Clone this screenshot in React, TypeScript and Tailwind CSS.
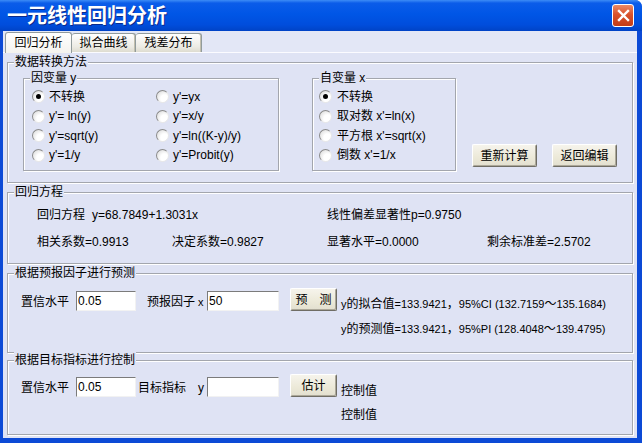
import React from "react";

// CJK runs stay at 12px, the latin runs in between drop to 11px
const Mixed = ({ text }: { text: string }) => (
  <>
    {text.split(/([\u3000-\u9fff\uff00-\uffef]+)/).map((part, i) =>
      /[\u3000-\u9fff\uff00-\uffef]/.test(part) ? (
        <span key={i}>{part}</span>
      ) : (
        <span key={i} className="text-[11px]">
          {part}
        </span>
      )
    )}
  </>
);

const Radio = ({ checked }: { checked?: boolean }) => (
  <span className="inline-flex h-[13px] w-[13px] shrink-0 items-center justify-center rounded-full border border-t-[#8a8a8a] border-l-[#8a8a8a] border-b-[#e8e8e8] border-r-[#e8e8e8] bg-[radial-gradient(circle_at_70%_70%,#ffffff_35%,#d4d4d4_100%)]">
    {checked && <span className="h-[5px] w-[5px] rounded-full bg-black" />}
  </span>
);

const Group = ({
  title,
  className,
  children,
}: {
  title: string;
  className?: string;
  children?: React.ReactNode;
}) => (
  <div
    className={
      "relative border border-[#a3a6ad] shadow-[inset_1px_1px_0_#ffffff,1px_1px_0_#ffffff] " +
      (className || "")
    }
  >
    <span className="absolute left-[6px] top-[-9px] bg-[#dfe3f4] px-[1px] leading-[16px] whitespace-nowrap">
      {title}
    </span>
    {children}
  </div>
);

const Button = ({ label, className }: { label: string; className?: string }) => (
  <button
    className={
      "flex h-[23px] shrink-0 items-center justify-center rounded-[2px] border border-t-[#ffffff] border-l-[#ffffff] border-b-[#6f6d64] border-r-[#6f6d64] bg-[linear-gradient(180deg,#f6f4ec_0%,#ece9d8_60%,#e2dfcf_100%)] shadow-[inset_-1px_-1px_0_#aca899] leading-[16px] " +
      (className || "")
    }
  >
    {label}
  </button>
);

const TextBox = ({ value, className }: { value?: string; className?: string }) => (
  <input
    readOnly
    value={value || ""}
    className={
      "h-[20px] shrink-0 border border-t-[#7b7b7b] border-l-[#7b7b7b] border-b-[#f2f2f2] border-r-[#f2f2f2] bg-white pl-[1px] text-[12px] leading-[16px] outline-none " +
      (className || "")
    }
  />
);

const Option = ({ checked, label, gap }: { checked?: boolean; label: string; gap: string }) => (
  <div className="flex items-center whitespace-nowrap">
    <Radio checked={checked} />
    <span className={gap}>{label}</span>
  </div>
);

export default function App() {
  const yOptions = [
    { label: "不转换", checked: true },
    { label: "y'=yx" },
    { label: "y'= ln(y)" },
    { label: "y'=x/y" },
    { label: "y'=sqrt(y)" },
    { label: "y'=ln((K-y)/y)" },
    { label: "y'=1/y" },
    { label: "y'=Probit(y)" },
  ];
  const xOptions = [
    { label: "不转换", checked: true },
    { label: "取对数 x'=ln(x)" },
    { label: "平方根 x'=sqrt(x)" },
    { label: "倒数 x'=1/x" },
  ];

  return (
    <div className="flex h-[443px] w-[642px] flex-col overflow-hidden rounded-tr-[7px] bg-[#0c4ad6] text-[12px] leading-[16px] text-black font-['Liberation_Sans','Noto_Sans_CJK_SC',sans-serif]">
      {/* title bar */}
      <div className="flex h-[31px] shrink-0 items-center justify-between bg-[linear-gradient(180deg,#3d8cf6_0%,#0b5ce9_10%,#0056e6_45%,#004ddc_80%,#0043c6_100%)] pl-[7px] pr-[8px]">
        <span className="text-[20px] font-bold leading-[24px] text-white [text-shadow:1px_1px_0_#0a2a8c]">
          一元线性回归分析
        </span>
        <div className="flex h-[23px] w-[22px] items-center justify-center rounded-[3px] border border-white bg-[linear-gradient(180deg,#eb8a66_0%,#d9522c_45%,#c23c17_100%)]">
          <svg width="13" height="13" viewBox="0 0 13 13">
            <path d="M2 2 L11 11 M11 2 L2 11" stroke="#ffffff" strokeWidth="2.4" strokeLinecap="square" />
          </svg>
        </div>
      </div>

      {/* client area */}
      <div className="mb-[5px] ml-[3px] mr-[5px] flex flex-1 flex-col bg-[#e3e7f6]">
        {/* tabs */}
        <div className="flex h-[21px] shrink-0 items-end pl-[2px]">
          <div className="relative z-10 mb-[-1px] flex h-[21px] w-[67px] items-center justify-center rounded-t-[3px] border border-b-0 border-[#919b9c] bg-[linear-gradient(180deg,#ffffff_0%,#f4f3ee_100%)]">
            回归分析
          </div>
          <div className="flex h-[19px] w-[64px] items-center justify-center rounded-t-[3px] border border-b-0 border-l-0 border-[#919b9c] bg-[linear-gradient(180deg,#ffffff_0%,#ecebe4_70%,#dedcd0_100%)] shadow-[inset_-1px_0_0_#c2bfae]">
            拟合曲线
          </div>
          <div className="flex h-[19px] w-[66px] items-center justify-center rounded-t-[3px] border border-b-0 border-l-0 border-[#919b9c] bg-[linear-gradient(180deg,#ffffff_0%,#ecebe4_70%,#dedcd0_100%)] shadow-[inset_-1px_0_0_#c2bfae]">
            残差分布
          </div>
        </div>

        {/* panel */}
        <div className="flex flex-1 flex-col border-t border-[#fbfbff] bg-[#dfe3f4] px-[4px] pt-[9px]">
          <Group title="数据转换方法" className="flex h-[121px] shrink-0 items-start pl-[15px] pt-[15px]">
            <Group title="因变量 y" className="h-[93px] w-[256px] shrink-0 pl-[8px] pt-[8px]">
              <div className="grid grid-cols-[124px_1fr] auto-rows-[19.5px]">
                {yOptions.map((o) => (
                  <Option key={o.label} checked={o.checked} label={o.label} gap="ml-[4px]" />
                ))}
              </div>
            </Group>
            <Group title="自变量 x" className="ml-[33px] h-[93px] w-[144px] shrink-0 pl-[6px] pt-[8px]">
              <div className="grid auto-rows-[19.5px]">
                {xOptions.map((o) => (
                  <Option key={o.label} checked={o.checked} label={o.label} gap="ml-[5px]" />
                ))}
              </div>
            </Group>
            <Button label="重新计算" className="ml-[16px] mt-[66px] w-[65px]" />
            <Button label="返回编辑" className="ml-[15px] mt-[66px] w-[65px]" />
          </Group>

          <Group title="回归方程" className="mt-[9px] h-[72px] shrink-0 pl-[29px] pt-[14px]">
            <div className="grid grid-cols-[135px_155px_160px_1fr] gap-y-[11px] whitespace-nowrap">
              <div className="col-span-2">
                回归方程<span className="ml-[7px]">y=68.7849+1.3031x</span>
              </div>
              <div className="col-span-2">线性偏差显著性p=0.9750</div>
              <div>相关系数=0.9913</div>
              <div>决定系数=0.9827</div>
              <div>显著水平=0.0000</div>
              <div>剩余标准差=2.5702</div>
            </div>
          </Group>

          <Group title="根据预报因子进行预测" className="mt-[9px] flex h-[80px] shrink-0 items-start pl-[13px] pt-[14px] whitespace-nowrap">
            <span className="mt-[6px] w-[55px] shrink-0">置信水平</span>
            <TextBox value="0.05" className="mt-[3px] w-[60px]" />
            <span className="ml-[11px] mt-[6px] w-[60px] shrink-0">
              预报因子<span className="ml-[3px] text-[11px]">x</span>
            </span>
            <TextBox value="50" className="mt-[3px] w-[72px]" />
            <Button label="预　测" className="ml-[11px] w-[47px]" />
            <div className="ml-[4px] mt-[8px] flex flex-col gap-[9px]">
              <span>
                <Mixed text="y的拟合值=133.9421，95%CI (132.7159～135.1684)" />
              </span>
              <span>
                <Mixed text="y的预测值=133.9421，95%PI (128.4048～139.4795)" />
              </span>
            </div>
          </Group>

          <Group title="根据目标指标进行控制" className="mt-[7px] flex h-[75px] shrink-0 items-start pl-[13px] pt-[13px] whitespace-nowrap">
            <span className="mt-[6px] w-[55px] shrink-0">置信水平</span>
            <TextBox value="0.05" className="mt-[3px] w-[60px]" />
            <span className="ml-[2px] mt-[6px] w-[69px] shrink-0">
              目标指标<span className="ml-[12px]">y</span>
            </span>
            <TextBox className="mt-[3px] w-[72px]" />
            <Button label="估计" className="ml-[11px] w-[47px]" />
            <div className="ml-[4px] mt-[9px] flex flex-col gap-[8px]">
              <span>控制值</span>
              <span>控制值</span>
            </div>
          </Group>
        </div>
      </div>
    </div>
  );
}
